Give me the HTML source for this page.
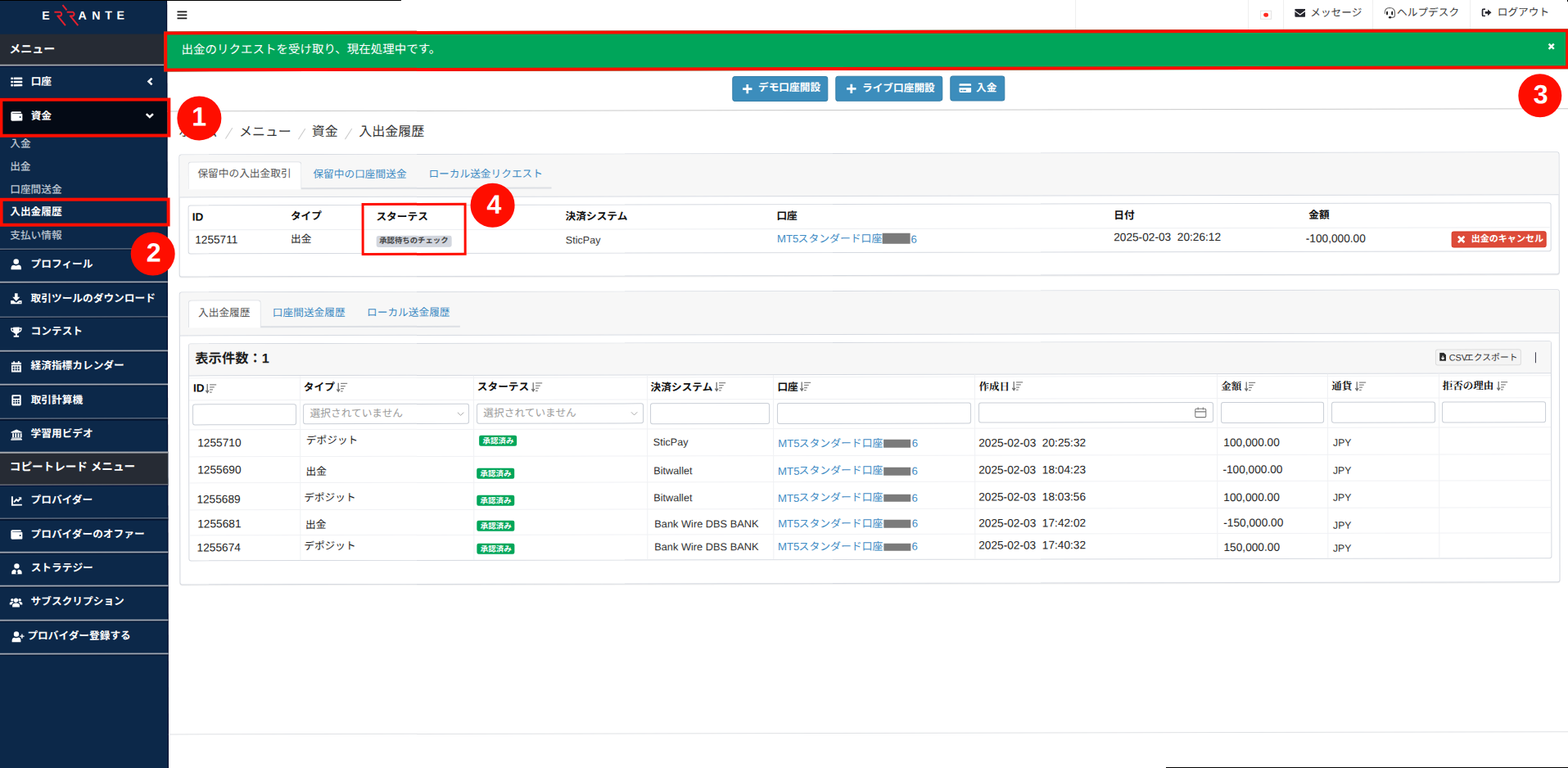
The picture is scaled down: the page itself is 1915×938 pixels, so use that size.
<!DOCTYPE html>
<html lang="ja">
<head>
<meta charset="utf-8">
<title>入出金履歴</title>
<style>
html,body{margin:0;padding:0;overflow:hidden;}
html{width:1915px;height:938px;}
body{width:1915px;height:938px;position:relative;overflow:hidden;background:#fff;
 font-family:"Liberation Sans",sans-serif;color:#333;}
div,span,svg{box-sizing:border-box;}
#page{position:absolute;left:0;top:0;width:1915px;height:938px;
 transform:rotate(-0.1117deg);transform-origin:957.5px 469px;}
.abs{position:absolute;}
.inp{position:absolute;background:#fff;border:1px solid #c9ced6;border-radius:3px;}
.circ{position:absolute;width:53.4px;height:53.4px;border-radius:50%;background:#ff0e00;}
.rbox{position:absolute;border:4px solid #ff0e00;}
.tx{position:absolute;white-space:nowrap;line-height:1.2;font-family:"Liberation Sans","Noto Sans CJK JP",sans-serif;}
.tx.b{font-weight:bold;}
.tx.m{font-weight:500;}
.tx.sf{font-family:"Liberation Serif","Noto Serif CJK SC",serif;font-weight:bold;}
</style>
</head>
<body>
<div id="page">

<!-- sidebar -->
<div class="abs" style="left:-6px;top:-6px;width:210.8px;height:950px;background:#0c2849;border-right:1.2px solid #03082a;"></div>
<svg style="position:absolute;left:0.91px;top:-1.87px;" width="204" height="42" viewBox="0 0 204 42"><g fill="none" stroke="#e3202e" stroke-width="2" stroke-linejoin="round"><path d="M66.3 15 H73.6 Q76.6 17.2 73.8 19.7 H70.2 L79.8 31.5"/><path d="M81.6 15 H89 Q92 17.2 89.2 19.7 H85.6 L95.2 31.5"/><path d="M76.4 6.5 L81.4 12.6"/></g></svg>
<span class="tx b" style="left:52.2px;top:8.9px;font-size:14.2px;color:#fff;">E</span>
<span class="tx b" style="left:96.4px;top:9.0px;font-size:14.2px;color:#fff;">A</span>
<span class="tx b" style="left:113.1px;top:9.0px;font-size:14.2px;color:#fff;">N</span>
<span class="tx b" style="left:129.0px;top:9.1px;font-size:14.2px;color:#fff;">T</span>
<span class="tx b" style="left:143.3px;top:9.1px;font-size:14.2px;color:#fff;">E</span>
<div style="position:absolute;left:-6px;top:40.33px;width:210.8px;height:37.5px;background:#262b34;"></div>
<span class="tx b" style="left:12.1px;top:49.8px;font-size:14px;color:#fff;">メニュー</span>
<div style="position:absolute;left:-6px;top:77.23px;width:210.8px;height:1.6px;background:#a6a9ae;"></div>
<div style="position:absolute;left:-6px;top:78.83px;width:210.8px;height:1.1px;background:#020a30;"></div>
<svg style="position:absolute;left:12.73px;top:91.16px;overflow:visible;" width="16" height="14" viewBox="-1 0 16 14"><rect x="0" y="1.6" width="2.6" height="2.6" rx=".6" fill="#fff"/><rect x="3.4" y="1.65" width="10.6" height="2.5" rx=".5" fill="#fff"/><rect x="0" y="5.800000000000001" width="2.6" height="2.6" rx=".6" fill="#fff"/><rect x="3.4" y="5.85" width="10.6" height="2.5" rx=".5" fill="#fff"/><rect x="0" y="10.0" width="2.6" height="2.6" rx=".6" fill="#fff"/><rect x="3.4" y="10.05" width="10.6" height="2.5" rx=".5" fill="#fff"/></svg>
<span class="tx b" style="left:38.4px;top:90.6px;font-size:12.7px;color:#fff;">口座</span>
<svg style="position:absolute;left:179.73px;top:93.48px;" width="8" height="10" viewBox="0 0 8 10"><path d="M6.3 1.2 L2.2 5 L6.3 8.8" fill="none" stroke="#fff" stroke-width="2.5"/></svg>
<div style="position:absolute;left:-6px;top:118.33px;width:210.8px;height:47px;background:#040a15;"></div>
<svg style="position:absolute;left:12.65px;top:133.36px;overflow:visible;" width="16" height="14" viewBox="-1 0 16 14"><path d="M1.6 1.5 H11.6 Q12.6 1.5 12.6 2.6 V3.3 H2.2 Q1.4 3.3 1.4 4 H13 Q14 4 14 5 V11.6 Q14 12.8 12.8 12.8 H1.6 Q0 12.8 0 11.4 V3 Q0 1.5 1.6 1.5 Z" fill="#fff"/><circle cx="11.3" cy="8.3" r="1" fill="#0c2849"/></svg>
<span class="tx b" style="left:38.3px;top:132.6px;font-size:12.7px;color:#fff;">資金</span>
<svg style="position:absolute;left:177.65px;top:136.48px;" width="11" height="8" viewBox="0 0 11 8"><path d="M1.4 1.6 L5.5 5.5 L9.6 1.6" fill="none" stroke="#fff" stroke-width="2.5"/></svg>
<span class="tx m" style="left:12.8px;top:167.0px;font-size:12.7px;color:#b9c3cf;">入金</span>
<span class="tx m" style="left:12.7px;top:195.0px;font-size:12.7px;color:#b9c3cf;">出金</span>
<span class="tx m" style="left:12.7px;top:223.0px;font-size:12.7px;color:#b9c3cf;">口座間送金</span>
<span class="tx b" style="left:12.6px;top:249.8px;font-size:12.7px;color:#fff;">入出金履歴</span>
<span class="tx m" style="left:12.6px;top:278.8px;font-size:12.7px;color:#b9c3cf;">支払い情報</span>
<div style="position:absolute;left:-6px;top:301.63px;width:210.8px;height:1.7px;background:#a2a8b3;"></div><div style="position:absolute;left:-6px;top:303.33px;width:210.8px;height:1.1px;background:#04122c;"></div>
<svg style="position:absolute;left:12.3px;top:314.46px;overflow:visible;" width="16" height="14" viewBox="-1 0 16 14"><circle cx="7" cy="3.6" r="3.3" fill="#fff"/><path d="M0.8 13.5 V11.5 Q0.8 8 4.2 7.8 Q7 9.4 9.8 7.8 Q13.2 8 13.2 11.5 V13.5 Z" fill="#fff"/></svg>
<span class="tx b" style="left:37.9px;top:313.9px;font-size:12.7px;color:#fff;">プロフィール</span>
<div style="position:absolute;left:-6px;top:342.13px;width:210.8px;height:1.7px;background:#a2a8b3;"></div><div style="position:absolute;left:-6px;top:343.83px;width:210.8px;height:1.1px;background:#04122c;"></div>
<svg style="position:absolute;left:12.22px;top:356.06px;overflow:visible;" width="16" height="14" viewBox="-1 0 16 14"><path d="M5.2 0.5 H8.8 V5 H11.6 L7 9.8 L2.4 5 H5.2 Z" fill="#fff"/><path d="M0.3 9.2 H3.6 L7 12 L10.4 9.2 H13.7 V13.5 H0.3 Z" fill="#fff"/><circle cx="11.6" cy="11.8" r=".7" fill="#0c2849"/></svg>
<span class="tx b" style="left:37.8px;top:355.5px;font-size:12.7px;color:#fff;">取引ツールのダウンロード</span>
<div style="position:absolute;left:-6px;top:384.63px;width:210.8px;height:1.7px;background:#a2a8b3;"></div><div style="position:absolute;left:-6px;top:386.33px;width:210.8px;height:1.1px;background:#04122c;"></div>
<svg style="position:absolute;left:12.14px;top:396.96px;overflow:visible;" width="16" height="14" viewBox="-1 0 16 14"><path d="M3.2 0.8 H10.8 V4.6 Q10.8 8.3 7.9 8.9 V11 H10.2 V13 H3.8 V11 H6.1 V8.9 Q3.2 8.3 3.2 4.6 Z" fill="#fff"/><path d="M3.4 2.2 H0.9 Q0.7 6 4 6.6 M10.6 2.2 H13.1 Q13.3 6 10 6.6" stroke="#fff" stroke-width="1.3" fill="none"/></svg>
<span class="tx b" style="left:37.7px;top:396.4px;font-size:12.7px;color:#fff;">コンテスト</span>
<div style="position:absolute;left:-6px;top:426.03px;width:210.8px;height:1.7px;background:#a2a8b3;"></div><div style="position:absolute;left:-6px;top:427.73px;width:210.8px;height:1.1px;background:#04122c;"></div>
<svg style="position:absolute;left:12.06px;top:438.76px;overflow:visible;" width="16" height="14" viewBox="-1 0 16 14"><rect x="3.2" y="0.3" width="1.9" height="3" rx=".5" fill="#fff"/><rect x="8.9" y="0.3" width="1.9" height="3" rx=".5" fill="#fff"/><path d="M1 2 H13 V4.4 H1 Z M1 5.2 H13 V13.6 H1 Z" fill="#fff"/><rect x="2.6" y="6.6" width="2" height="2" fill="#0c2849"/><rect x="2.6" y="9.7" width="2" height="2" fill="#0c2849"/><rect x="5.7" y="6.6" width="2" height="2" fill="#0c2849"/><rect x="5.7" y="9.7" width="2" height="2" fill="#0c2849"/><rect x="8.8" y="6.6" width="2" height="2" fill="#0c2849"/><rect x="8.8" y="9.7" width="2" height="2" fill="#0c2849"/></svg>
<span class="tx b" style="left:37.6px;top:438.2px;font-size:12.7px;color:#fff;">経済指標カレンダー</span>
<div style="position:absolute;left:-6px;top:467.43px;width:210.8px;height:1.7px;background:#a2a8b3;"></div><div style="position:absolute;left:-6px;top:469.13px;width:210.8px;height:1.1px;background:#04122c;"></div>
<svg style="position:absolute;left:11.97px;top:480.16px;overflow:visible;" width="16" height="14" viewBox="-1 0 16 14"><rect x="1.3" y="0.4" width="11.4" height="13.2" rx="1.4" fill="#fff"/><rect x="3.2" y="2.3" width="7.6" height="2.7" fill="#0c2849"/><rect x="3.2" y="6.6" width="1.9" height="1.8" fill="#0c2849"/><rect x="3.2" y="9.3" width="1.9" height="1.8" fill="#0c2849"/><rect x="6.0" y="6.6" width="1.9" height="1.8" fill="#0c2849"/><rect x="6.0" y="9.3" width="1.9" height="1.8" fill="#0c2849"/><rect x="8.8" y="6.6" width="1.9" height="1.8" fill="#0c2849"/><rect x="8.8" y="9.3" width="1.9" height="1.8" fill="#0c2849"/></svg>
<span class="tx b" style="left:37.6px;top:479.6px;font-size:12.7px;color:#fff;">取引計算機</span>
<div style="position:absolute;left:-6px;top:508.73px;width:210.8px;height:1.7px;background:#a2a8b3;"></div><div style="position:absolute;left:-6px;top:510.43px;width:210.8px;height:1.1px;background:#04122c;"></div>
<svg style="position:absolute;left:11.89px;top:521.76px;overflow:visible;" width="16" height="14" viewBox="-1 0 16 14"><path d="M7 0.6 L13.6 3.6 V4.8 H0.4 V3.6 Z" fill="#fff"/><rect x="2.0" y="5.4" width="1.9" height="5" fill="#fff"/><rect x="5.2" y="5.4" width="1.9" height="5" fill="#fff"/><rect x="8.4" y="5.4" width="1.9" height="5" fill="#fff"/><rect x="11.600000000000001" y="5.4" width="1.9" height="5" fill="#fff"/><rect x="1" y="10.6" width="12" height="1.3" fill="#fff"/><rect x="0.2" y="12.3" width="13.6" height="1.5" fill="#fff"/></svg>
<span class="tx b" style="left:37.5px;top:521.2px;font-size:12.7px;color:#fff;">学習用ビデオ</span>
<div style="position:absolute;left:-6px;top:550.93px;width:210.8px;height:39.8px;background:#262b34;"></div>
<div style="position:absolute;left:-6px;top:550.33px;width:210.8px;height:1.6px;background:#a6a9ae;"></div>
<div style="position:absolute;left:-6px;top:589.73px;width:210.8px;height:1.6px;background:#a6a9ae;"></div>
<div style="position:absolute;left:-6px;top:591.33px;width:210.8px;height:1.1px;background:#020a30;"></div>
<span class="tx b" style="left:11.6px;top:561.2px;font-size:13.6px;color:#fff;">コピートレード メニュー</span>
<svg style="position:absolute;left:11.74px;top:602.86px;overflow:visible;" width="16" height="14" viewBox="-1 0 16 14"><path d="M0.6 1.5 H2.6 V10.9 H13.6 V12.8 H0.6 Z" fill="#fff"/><path d="M3.8 8.6 L6.8 5.2 L8.8 7 L11.2 4.2" stroke="#fff" stroke-width="1.9" fill="none"/><path d="M9.2 2.4 H13 V6.2 Z" fill="#fff"/></svg>
<span class="tx b" style="left:37.3px;top:602.3px;font-size:12.7px;color:#fff;">プロバイダー</span>
<div style="position:absolute;left:-6px;top:630.73px;width:210.8px;height:1.7px;background:#a2a8b3;"></div><div style="position:absolute;left:-6px;top:632.43px;width:210.8px;height:1.1px;background:#04122c;"></div>
<svg style="position:absolute;left:11.65px;top:644.16px;overflow:visible;" width="16" height="14" viewBox="-1 0 16 14"><path d="M1.6 1.5 H11.6 Q12.6 1.5 12.6 2.6 V3.3 H2.2 Q1.4 3.3 1.4 4 H13 Q14 4 14 5 V11.6 Q14 12.8 12.8 12.8 H1.6 Q0 12.8 0 11.4 V3 Q0 1.5 1.6 1.5 Z" fill="#fff"/><circle cx="11.3" cy="8.3" r="1" fill="#0c2849"/></svg>
<span class="tx b" style="left:37.2px;top:643.6px;font-size:12.7px;color:#fff;">プロバイダーのオファー</span>
<div style="position:absolute;left:-6px;top:672.03px;width:210.8px;height:1.7px;background:#a2a8b3;"></div><div style="position:absolute;left:-6px;top:673.73px;width:210.8px;height:1.1px;background:#04122c;"></div>
<svg style="position:absolute;left:11.57px;top:685.76px;overflow:visible;" width="16" height="14" viewBox="-1 0 16 14"><circle cx="7" cy="3.5" r="3.2" fill="#fff"/><path d="M0.8 13.5 V11.5 Q0.8 8 4.6 7.6 L7 10 L9.4 7.6 Q13.2 8 13.2 11.5 V13.5 Z" fill="#fff"/><path d="M6.3 9.5 H7.7 L8.3 12.6 L7 13.6 L5.7 12.6 Z" fill="#0c2849"/></svg>
<span class="tx b" style="left:37.2px;top:685.2px;font-size:12.7px;color:#fff;">ストラテジー</span>
<div style="position:absolute;left:-6px;top:713.43px;width:210.8px;height:1.7px;background:#a2a8b3;"></div><div style="position:absolute;left:-6px;top:715.13px;width:210.8px;height:1.1px;background:#04122c;"></div>
<svg style="position:absolute;left:11.49px;top:726.96px;overflow:visible;" width="16" height="14" viewBox="-1 0 16 14"><circle cx="7" cy="4.3" r="2.6" fill="#fff"/><circle cx="2.4" cy="3.9" r="1.8" fill="#fff"/><circle cx="11.6" cy="3.9" r="1.8" fill="#fff"/><path d="M2.6 12.6 V10.6 Q2.6 7.6 7 7.6 Q11.4 7.6 11.4 10.6 V12.6 Z" fill="#fff"/><path d="M-0.8 9.6 V8.4 Q-0.8 6.2 2.4 6.2 Q3.6 6.2 4.2 6.8 Q2.2 7.6 1.8 9.6 Z M14.8 9.6 V8.4 Q14.8 6.2 11.6 6.2 Q10.4 6.2 9.8 6.8 Q11.8 7.6 12.2 9.6 Z" fill="#fff"/></svg>
<span class="tx b" style="left:37.1px;top:726.4px;font-size:12.7px;color:#fff;">サブスクリプション</span>
<div style="position:absolute;left:-6px;top:754.83px;width:210.8px;height:1.7px;background:#a2a8b3;"></div><div style="position:absolute;left:-6px;top:756.53px;width:210.8px;height:1.1px;background:#04122c;"></div>
<svg style="position:absolute;left:12.81px;top:768.56px;overflow:visible;" width="16" height="14" viewBox="-1 0 16 14"><circle cx="5.4" cy="3.6" r="3.2" fill="#fff"/><path d="M0 13.5 V11.5 Q0 8 3 7.8 Q5.4 9.2 7.8 7.8 Q10.8 8 10.8 11.5 V13.5 Z" fill="#fff"/><path d="M11.6 3.6 H13 V5.6 H15 V7 H13 V9 H11.6 V7 H9.6 V5.6 H11.6 Z" fill="#fff"/></svg>
<span class="tx b" style="left:32.8px;top:768.0px;font-size:12.7px;color:#fff;">プロバイダー登録する</span>
<div style="position:absolute;left:-6px;top:796.43px;width:210.8px;height:1.7px;background:#a2a8b3;"></div><div style="position:absolute;left:-6px;top:798.13px;width:210.8px;height:1.1px;background:#04122c;"></div>
<!-- top bar -->
<svg style="position:absolute;left:216.89px;top:10.95px;" width="13" height="12" viewBox="0 0 13 12"><path d="M0.3 2 H12.2 M0.3 6 H12.2 M0.3 10 H12.2" stroke="#1a1a1a" stroke-width="1.7"/></svg>
<div style="position:absolute;left:1313.92px;top:-2.31px;width:1px;height:40.5px;background:#eeeeee;"></div>
<div style="position:absolute;left:1524.92px;top:-1.9px;width:1px;height:40.5px;background:#eeeeee;"></div>
<div style="position:absolute;left:1568.22px;top:-1.81px;width:1px;height:40.5px;background:#eeeeee;"></div>
<div style="position:absolute;left:1677.32px;top:-1.6px;width:1px;height:40.5px;background:#eeeeee;"></div>
<div style="position:absolute;left:1796.32px;top:-1.37px;width:1px;height:40.5px;background:#eeeeee;"></div>
<div style="position:absolute;left:1539.89px;top:14.13px;width:14.5px;height:10.5px;background:#fff;border:1px solid #e3e3e3;"></div>
<div style="position:absolute;left:1544.28px;top:16.64px;width:5.6px;height:5.6px;background:#ff2a1f;border-radius:50%;"></div>
<svg style="position:absolute;left:1581.99px;top:12.02px;" width="13.4" height="10.2" viewBox="0 0 14 11"><path d="M0 1.2 Q0 0 1.2 0 H12.8 Q14 0 14 1.2 V2 L7 7 L0 2 Z M0 3.6 L7 8.7 L14 3.6 V9.8 Q14 11 12.8 11 H1.2 Q0 11 0 9.8 Z" fill="#26262e"/></svg>
<span class="tx" style="left:1601.1px;top:9.9px;font-size:12.7px;color:#3c3c3c;">メッセージ</span>
<svg style="position:absolute;left:1690.9px;top:9.83px;" width="15" height="15" viewBox="0 0 15 15"><path d="M1.2 8.2 Q0.5 1 7 0.9 Q13.4 1 13.4 7 V10.4 Q13.4 12.7 9.2 12.9" fill="none" stroke="#6a6a6a" stroke-width="1.15"/><ellipse cx="3.9" cy="7.5" rx="1.05" ry="2.5" fill="#1a1a1a"/><ellipse cx="10.1" cy="7.5" rx="1.05" ry="2.5" fill="#1a1a1a"/><ellipse cx="7.5" cy="12.7" rx="1.9" ry="1.25" fill="#222"/></svg>
<span class="tx" style="left:1706.9px;top:10.1px;font-size:12.7px;color:#3c3c3c;">ヘルプデスク</span>
<svg style="position:absolute;left:1810.49px;top:11.96px;" width="13.3" height="10.0" viewBox="0 0 14 11.5"><path d="M5 0.9 H2.6 Q1 0.9 1 2.5 V9 Q1 10.6 2.6 10.6 H5" fill="none" stroke="#26262e" stroke-width="2"/><path d="M4.6 4.1 H8.4 V1.3 L13.6 5.75 L8.4 10.2 V7.4 H4.6 Z" fill="#26262e"/></svg>
<span class="tx" style="left:1829.6px;top:10.4px;font-size:12.7px;color:#3c3c3c;">ログアウト</span>
<!-- alert banner -->
<div style="position:absolute;left:200.8px;top:36.9px;width:1716.1px;height:48.8px;background:#00a55a;border:4.1px solid #ff0e00;"></div>
<span class="tx" style="left:222.2px;top:51.2px;font-size:14.5px;color:#fff;">出金のリクエストを受け取り、現在処理中です。</span>
<svg style="position:absolute;left:1891.31px;top:54.32px;" width="9" height="9" viewBox="0 0 9 9"><path d="M1.4 1.4 L7.6 7.6 M7.6 1.4 L1.4 7.6" stroke="#fff" stroke-width="2.4"/></svg>
<!-- buttons -->
<div style="position:absolute;left:895.23px;top:92.88px;width:116.5px;height:31px;background:#3c8dbc;border:1px solid #367fa9;border-radius:3.5px;"></div><svg style="position:absolute;left:906.72px;top:101.9px;" width="13" height="13" viewBox="0 0 13 13"><path d="M6.5 0.8 V12.2 M0.8 6.5 H12.2" stroke="#fff" stroke-width="2.7"/></svg><span class="tx b" style="left:926.7px;top:100.3px;font-size:12.7px;color:#fff;">デモ口座開設</span>
<div style="position:absolute;left:1021.23px;top:93.12px;width:130.5px;height:31px;background:#3c8dbc;border:1px solid #367fa9;border-radius:3.5px;"></div><svg style="position:absolute;left:1033.72px;top:102.15px;" width="13" height="13" viewBox="0 0 13 13"><path d="M6.5 0.8 V12.2 M0.8 6.5 H12.2" stroke="#fff" stroke-width="2.7"/></svg><span class="tx b" style="left:1053.7px;top:100.6px;font-size:12.7px;color:#fff;">ライブ口座開設</span>
<div style="position:absolute;left:1161.23px;top:93.4px;width:66.5px;height:31px;background:#3c8dbc;border:1px solid #367fa9;border-radius:3.5px;"></div><svg style="position:absolute;left:1171.72px;top:101.92px;" width="15" height="12" viewBox="0 0 15 12"><path d="M1.4 0.6 H13.6 Q15 0.6 15 2 V3.2 H0 V2 Q0 0.6 1.4 0.6 Z M0 5.6 H15 V10 Q15 11.4 13.6 11.4 H1.4 Q0 11.4 0 10 Z" fill="#fff"/><rect x="1.8" y="8.2" width="2.4" height="1.4" fill="#3c8dbc"/><rect x="5" y="8.2" width="3.6" height="1.4" fill="#3c8dbc"/></svg><span class="tx b" style="left:1192.7px;top:100.8px;font-size:12.7px;color:#fff;">入金</span>
<div style="position:absolute;left:204.8px;top:133.6px;width:1720px;height:1.3px;background:#c9c9c9;"></div>
<!-- breadcrumb -->
<span class="tx" style="left:218.4px;top:150.0px;font-size:15.95px;color:#363636;">ホーム</span>
<svg style="position:absolute;left:274.81px;top:154.37px;" width="11" height="15" viewBox="0 0 11 15"><path d="M1 14.1 L9.4 1" stroke="#cbcbcb" stroke-width="1.05" fill="none"/></svg>
<span class="tx" style="left:292.6px;top:150.1px;font-size:15.95px;color:#363636;">メニュー</span>
<svg style="position:absolute;left:364.31px;top:154.54px;" width="11" height="15" viewBox="0 0 11 15"><path d="M1 14.1 L9.4 1" stroke="#cbcbcb" stroke-width="1.05" fill="none"/></svg>
<span class="tx" style="left:381.4px;top:150.3px;font-size:15.95px;color:#363636;">資金</span>
<svg style="position:absolute;left:420.61px;top:154.65px;" width="11" height="15" viewBox="0 0 11 15"><path d="M1 14.1 L9.4 1" stroke="#cbcbcb" stroke-width="1.05" fill="none"/></svg>
<span class="tx" style="left:438.8px;top:150.4px;font-size:16.05px;color:#363636;">入出金履歴</span>
<!-- panel 1 : pending -->
<div style="position:absolute;left:219.1px;top:187.3px;width:1685.7px;height:149.8px;background:#fff;border:1px solid #d5d9e0;border-radius:3px;box-shadow:0 1px 1px rgba(0,0,0,.07);"></div>
<div style="position:absolute;left:220.1px;top:188.3px;width:1683.7px;height:50.4px;background:#f7f7f7;border-radius:2px 2px 0 0;"></div>
<div style="position:absolute;left:220.1px;top:238.5px;width:1683.7px;height:1.2px;background:#d5d9e0;"></div>
<div style="position:absolute;left:368.47px;top:228.45px;width:306px;height:1.2px;background:#dcdfe4;"></div>
<div style="position:absolute;left:229.83px;top:196.18px;width:139.1px;height:33.4px;background:#fff;border:1px solid #dcdfe4;border-bottom:none;border-radius:4px 4px 0 0;"></div>
<span class="tx" style="left:241.9px;top:204.4px;font-size:12.7px;color:#5a5a5a;">保留中の入出金取引</span>
<span class="tx" style="left:382.9px;top:204.7px;font-size:12.7px;color:#3f8cc4;">保留中の口座間送金</span>
<span class="tx" style="left:523.9px;top:204.7px;font-size:12.7px;color:#3f8cc4;">ローカル送金リクエスト</span>
<div style="position:absolute;left:229.7px;top:249.4px;width:1665.4px;height:59.4px;background:#fff;border:1px solid #d5d9e0;border-radius:3px;"></div>
<div style="position:absolute;left:230.7px;top:278.9px;width:1662.8px;height:1px;background:#eceef1;"></div>
<span class="tx b" style="left:235.1px;top:256.2px;font-size:13.6px;color:#111;">ID</span>
<span class="tx b" style="left:355.3px;top:256.4px;font-size:12.7px;color:#111;">タイプ</span>
<span class="tx b" style="left:459.8px;top:256.6px;font-size:12.7px;color:#111;">スターテス</span>
<span class="tx b" style="left:691.0px;top:256.7px;font-size:12.7px;color:#111;">決済システム</span>
<span class="tx b" style="left:948.8px;top:257.0px;font-size:12.7px;color:#111;">口座</span>
<span class="tx b" style="left:1360.6px;top:256.8px;font-size:12.7px;color:#111;">日付</span>
<span class="tx b" style="left:1598.6px;top:257.0px;font-size:12.7px;color:#111;">金額</span>
<span class="tx" style="left:238.5px;top:283.9px;font-size:13.7px;color:#262626;">1255711</span>
<span class="tx" style="left:355.3px;top:284.0px;font-size:12.7px;color:#262626;">出金</span>
<div style="position:absolute;left:459.75px;top:287.23px;width:92.2px;height:13.4px;background:#d2d6de;border-radius:2.5px;"></div>
<span class="tx b" style="left:463.5px;top:286.8px;font-size:9.4px;color:#444;">承認待ちのチェック</span>
<span class="tx" style="left:691.1px;top:285.5px;font-size:12.6px;color:#3a3a3a;">SticPay</span>
<span class="tx" style="left:949.4px;top:284.4px;font-size:13.2px;color:#3f8cc4;">MT5</span><span class="tx" style="left:974.9px;top:284.1px;font-size:12.85px;color:#3f8cc4;">スタンダード口座</span><div style="position:absolute;left:1078.26px;top:285.13px;width:33.6px;height:12.4px;background:#7b7b7b;"></div><span class="tx" style="left:1112.9px;top:284.7px;font-size:13.2px;color:#3f8cc4;">6</span>
<span class="tx" style="left:1360.5px;top:283.4px;font-size:13.7px;color:#262626;white-space:pre;">2025-02-03  20:26:12</span>
<span class="tx" style="left:1595.1px;top:285.4px;font-size:13.7px;color:#262626;">-100,000.00</span>
<div style="position:absolute;left:1773.36px;top:284.49px;width:115.6px;height:19.2px;background:#dd4b39;border:1px solid #d73925;border-radius:3px;"></div>
<svg style="position:absolute;left:1780.15px;top:289.0px;" width="10" height="10" viewBox="0 0 10 10"><path d="M1.3 1.3 L8.7 8.7 M8.7 1.3 L1.3 8.7" stroke="#fff" stroke-width="2.7"/></svg>
<span class="tx b" style="left:1797.0px;top:287.4px;font-size:11.05px;color:#fff;">出金のキャンセル</span>
<!-- panel 2 : history -->
<div style="position:absolute;left:219.1px;top:355.4px;width:1685.7px;height:358.1px;background:#fff;border:1px solid #d5d9e0;border-radius:3px;box-shadow:0 1px 1px rgba(0,0,0,.07);"></div>
<div style="position:absolute;left:220.1px;top:356.4px;width:1683.7px;height:51.8px;background:#f7f7f7;border-radius:2px 2px 0 0;"></div>
<div style="position:absolute;left:220.1px;top:407.9px;width:1683.7px;height:1.2px;background:#d5d9e0;"></div>
<div style="position:absolute;left:318.14px;top:397.35px;width:244px;height:1.2px;background:#dcdfe4;"></div>
<div style="position:absolute;left:229.5px;top:364.98px;width:89.6px;height:33.6px;background:#fff;border:1px solid #dcdfe4;border-bottom:none;border-radius:4px 4px 0 0;"></div>
<span class="tx" style="left:242.2px;top:373.8px;font-size:12.7px;color:#5a5a5a;">入出金履歴</span>
<span class="tx" style="left:333.0px;top:374.0px;font-size:12.7px;color:#3f8cc4;">口座間送金履歴</span>
<span class="tx" style="left:448.2px;top:374.2px;font-size:12.7px;color:#3f8cc4;">ローカル送金履歴</span>
<div style="position:absolute;left:229.7px;top:417.8px;width:1665px;height:266.2px;background:#fff;border:1px solid #d5d9e0;border-radius:3px;"></div>
<div style="position:absolute;left:230.7px;top:418.8px;width:1663px;height:38.4px;background:#f7f7f7;"></div>
<div style="position:absolute;left:230.7px;top:457.1px;width:1663px;height:1.2px;background:#d5d9e0;"></div>
<span class="tx b" style="left:238.4px;top:427.3px;font-size:16.3px;color:#1d1d1d;">表示件数：1</span>
<div style="position:absolute;left:1753.08px;top:428.05px;width:104.5px;height:20px;background:#f4f4f4;border:1px solid #ddd;border-radius:3px;"></div>
<svg style="position:absolute;left:1758.47px;top:432.36px;" width="8.4" height="10.6" viewBox="0 0 8 10"><path d="M0.3 0.3 H5 L7.7 3 V9.7 H0.3 Z" fill="#2a2a2a"/><path d="M4 3.8 V7.6 M2.4 6.2 L4 7.8 L5.6 6.2" stroke="#fff" stroke-width="1.1" fill="none"/></svg>
<span class="tx" style="left:1769.8px;top:432.0px;font-size:10.9px;color:#333;">CSV</span>
<span class="tx" style="left:1789.1px;top:432.0px;font-size:10.8px;color:#333;">エクスポート</span>
<div style="position:absolute;left:1875.18px;top:431.99px;width:1.3px;height:13px;background:#3a3a4a;"></div>
<div style="position:absolute;left:230.7px;top:460.2px;width:1663px;height:1px;background:#f1f2f4;"></div>
<div style="position:absolute;left:366.2px;top:458.3px;width:1px;height:224.9px;background:#f0f1f4;"></div>
<div style="position:absolute;left:578.2px;top:458.3px;width:1px;height:224.9px;background:#f0f1f4;"></div>
<div style="position:absolute;left:790.4px;top:458.3px;width:1px;height:224.9px;background:#f0f1f4;"></div>
<div style="position:absolute;left:944.2px;top:458.3px;width:1px;height:224.9px;background:#f0f1f4;"></div>
<div style="position:absolute;left:1190.4px;top:458.3px;width:1px;height:224.9px;background:#f0f1f4;"></div>
<div style="position:absolute;left:1486.1px;top:458.3px;width:1px;height:224.9px;background:#f0f1f4;"></div>
<div style="position:absolute;left:1621.3px;top:458.3px;width:1px;height:224.9px;background:#f0f1f4;"></div>
<div style="position:absolute;left:1756.6px;top:458.3px;width:1px;height:224.9px;background:#f0f1f4;"></div>
<div style="position:absolute;left:230.7px;top:486.9px;width:1663px;height:1px;background:#f0f1f4;"></div>
<div style="position:absolute;left:230.7px;top:522.9px;width:1663px;height:1px;background:#f0f1f4;"></div>
<div style="position:absolute;left:230.7px;top:555.8px;width:1663px;height:1px;background:#f0f1f4;"></div>
<div style="position:absolute;left:230.7px;top:588.1px;width:1663px;height:1px;background:#f0f1f4;"></div>
<div style="position:absolute;left:230.7px;top:621.0px;width:1663px;height:1px;background:#f0f1f4;"></div>
<div style="position:absolute;left:230.7px;top:652.2px;width:1663px;height:1px;background:#f0f1f4;"></div>
<span class="tx b" style="left:236.0px;top:465.4px;font-size:13.6px;color:#111;">ID</span>
<svg style="position:absolute;left:250.8px;top:466.82px;" width="14" height="13" viewBox="0 0 14 13"><path d="M2.2 0.6 V11 M0.3 8.4 L2.2 11.2 L4.1 8.4" fill="none" stroke="#6e6e6e" stroke-width="1.25"/><path d="M5.1 1.4 H13.2 M5.1 4.5 H10.8 M5.1 7.6 H9 M5.1 10.7 H7.7" stroke="#868686" stroke-width="1.25"/></svg>
<span class="tx b" style="left:370.8px;top:465.2px;font-size:12.7px;color:#111;">タイプ</span>
<svg style="position:absolute;left:411.3px;top:466.13px;" width="14" height="13" viewBox="0 0 14 13"><path d="M2.2 0.6 V11 M0.3 8.4 L2.2 11.2 L4.1 8.4" fill="none" stroke="#6e6e6e" stroke-width="1.25"/><path d="M5.1 1.4 H13.2 M5.1 4.5 H10.8 M5.1 7.6 H9 M5.1 10.7 H7.7" stroke="#868686" stroke-width="1.25"/></svg>
<span class="tx b" style="left:582.8px;top:465.4px;font-size:12.7px;color:#111;">スターテス</span>
<svg style="position:absolute;left:648.6px;top:466.4px;" width="14" height="13" viewBox="0 0 14 13"><path d="M2.2 0.6 V11 M0.3 8.4 L2.2 11.2 L4.1 8.4" fill="none" stroke="#6e6e6e" stroke-width="1.25"/><path d="M5.1 1.4 H13.2 M5.1 4.5 H10.8 M5.1 7.6 H9 M5.1 10.7 H7.7" stroke="#868686" stroke-width="1.25"/></svg>
<span class="tx b" style="left:794.6px;top:465.5px;font-size:12.7px;color:#111;">決済システム</span>
<svg style="position:absolute;left:873.0px;top:466.44px;" width="14" height="13" viewBox="0 0 14 13"><path d="M2.2 0.6 V11 M0.3 8.4 L2.2 11.2 L4.1 8.4" fill="none" stroke="#6e6e6e" stroke-width="1.25"/><path d="M5.1 1.4 H13.2 M5.1 4.5 H10.8 M5.1 7.6 H9 M5.1 10.7 H7.7" stroke="#868686" stroke-width="1.25"/></svg>
<span class="tx b" style="left:949.4px;top:465.6px;font-size:12.7px;color:#111;">口座</span>
<svg style="position:absolute;left:977.01px;top:466.44px;" width="14" height="13" viewBox="0 0 14 13"><path d="M2.2 0.6 V11 M0.3 8.4 L2.2 11.2 L4.1 8.4" fill="none" stroke="#6e6e6e" stroke-width="1.25"/><path d="M5.1 1.4 H13.2 M5.1 4.5 H10.8 M5.1 7.6 H9 M5.1 10.7 H7.7" stroke="#868686" stroke-width="1.25"/></svg>
<span class="tx sf" style="left:1195.6px;top:465.6px;font-size:12.5px;color:#111;">作成日</span>
<svg style="position:absolute;left:1235.51px;top:466.34px;" width="14" height="13" viewBox="0 0 14 13"><path d="M2.2 0.6 V11 M0.3 8.4 L2.2 11.2 L4.1 8.4" fill="none" stroke="#6e6e6e" stroke-width="1.25"/><path d="M5.1 1.4 H13.2 M5.1 4.5 H10.8 M5.1 7.6 H9 M5.1 10.7 H7.7" stroke="#868686" stroke-width="1.25"/></svg>
<span class="tx sf" style="left:1491.2px;top:465.7px;font-size:12.5px;color:#111;">金額</span>
<svg style="position:absolute;left:1519.71px;top:466.5px;" width="14" height="13" viewBox="0 0 14 13"><path d="M2.2 0.6 V11 M0.3 8.4 L2.2 11.2 L4.1 8.4" fill="none" stroke="#6e6e6e" stroke-width="1.25"/><path d="M5.1 1.4 H13.2 M5.1 4.5 H10.8 M5.1 7.6 H9 M5.1 10.7 H7.7" stroke="#868686" stroke-width="1.25"/></svg>
<span class="tx sf" style="left:1626.2px;top:466.0px;font-size:12.5px;color:#111;">通貨</span>
<svg style="position:absolute;left:1654.81px;top:466.76px;" width="14" height="13" viewBox="0 0 14 13"><path d="M2.2 0.6 V11 M0.3 8.4 L2.2 11.2 L4.1 8.4" fill="none" stroke="#6e6e6e" stroke-width="1.25"/><path d="M5.1 1.4 H13.2 M5.1 4.5 H10.8 M5.1 7.6 H9 M5.1 10.7 H7.7" stroke="#868686" stroke-width="1.25"/></svg>
<span class="tx sf" style="left:1761.8px;top:465.9px;font-size:12.5px;color:#111;">拒否の理由</span>
<svg style="position:absolute;left:1828.01px;top:466.7px;" width="14" height="13" viewBox="0 0 14 13"><path d="M2.2 0.6 V11 M0.3 8.4 L2.2 11.2 L4.1 8.4" fill="none" stroke="#6e6e6e" stroke-width="1.25"/><path d="M5.1 1.4 H13.2 M5.1 4.5 H10.8 M5.1 7.6 H9 M5.1 10.7 H7.7" stroke="#868686" stroke-width="1.25"/></svg>
<div class="inp" style="left:234.95px;top:491.99px;width:126.6px;height:26.4px;"></div>
<div class="inp" style="left:370.35px;top:492.06px;width:203px;height:25.4px;"></div><span class="tx" style="left:378.5px;top:497.4px;font-size:12.7px;color:#9c9c9c;">選択されていません</span><svg style="position:absolute;left:557.83px;top:502.22px;" width="9" height="6" viewBox="0 0 9 6"><path d="M0.8 0.9 L4.5 4.6 L8.2 0.9" fill="none" stroke="#a3a3a3" stroke-width="0.95"/></svg>
<div class="inp" style="left:582.15px;top:492.07px;width:203.4px;height:25.4px;"></div><span class="tx" style="left:590.3px;top:497.4px;font-size:12.7px;color:#9c9c9c;">選択されていません</span><svg style="position:absolute;left:770.03px;top:502.23px;" width="9" height="6" viewBox="0 0 9 6"><path d="M0.8 0.9 L4.5 4.6 L8.2 0.9" fill="none" stroke="#a3a3a3" stroke-width="0.95"/></svg>
<div class="inp" style="left:793.95px;top:492.28px;width:146px;height:25.8px;"></div>
<div class="inp" style="left:948.96px;top:491.58px;width:236.8px;height:26.6px;"></div>
<div class="inp" style="left:1195.36px;top:491.86px;width:286.4px;height:25.4px;"></div>
<svg style="position:absolute;left:1459.44px;top:498.38px;" width="14.5" height="13.5" viewBox="0 0 14.5 13.5"><rect x="0.7" y="2.2" width="13" height="10.4" rx="1.4" fill="none" stroke="#7b7b7b" stroke-width="1.1"/><path d="M0.7 5.9 H13.7 M4.1 0.5 V3.4 M10.3 0.5 V3.4" stroke="#7b7b7b" stroke-width="1.1"/></svg>
<div class="inp" style="left:1490.96px;top:492.24px;width:126px;height:25.8px;"></div>
<div class="inp" style="left:1625.96px;top:492.30px;width:126.8px;height:25.8px;"></div>
<div class="inp" style="left:1761.16px;top:492.17px;width:127.2px;height:26.2px;"></div>
<span class="tx" style="left:241.1px;top:532.2px;font-size:13.7px;color:#262626;">1255710</span>
<span class="tx" style="left:373.7px;top:530.1px;font-size:12.7px;color:#262626;">デポジット</span>
<div style="position:absolute;left:585.08px;top:530.87px;width:45.8px;height:12.8px;background:#00a65a;border-radius:2.2px;"></div>
<span class="tx b" style="left:589.3px;top:531.7px;font-size:9.5px;color:#fff;">承認済み</span>
<span class="tx" style="left:797.7px;top:532.5px;font-size:12.6px;color:#333;">SticPay</span>
<span class="tx" style="left:950.0px;top:533.9px;font-size:13.2px;color:#3f8cc4;">MT5</span><span class="tx" style="left:975.5px;top:533.6px;font-size:12.85px;color:#3f8cc4;">スタンダード口座</span><div style="position:absolute;left:1078.77px;top:537.49px;width:33.6px;height:9.3px;background:#7b7b7b;"></div><span class="tx" style="left:1113.5px;top:534.2px;font-size:13.2px;color:#3f8cc4;">6</span>
<span class="tx" style="left:1195.1px;top:533.5px;font-size:13.7px;color:#262626;white-space:pre;">2025-02-03  20:25:32</span>
<span class="tx" style="left:1494.2px;top:534.1px;font-size:13.7px;color:#262626;">100,000.00</span>
<span class="tx" style="left:1627.9px;top:535.0px;font-size:12.2px;color:#333;">JPY</span>
<span class="tx" style="left:241.0px;top:565.2px;font-size:13.7px;color:#262626;">1255690</span>
<span class="tx" style="left:373.4px;top:567.9px;font-size:12.7px;color:#262626;">出金</span>
<div style="position:absolute;left:582.2px;top:570.97px;width:45.8px;height:12.8px;background:#00a65a;border-radius:2.2px;"></div>
<span class="tx b" style="left:586.4px;top:571.8px;font-size:9.5px;color:#fff;">承認済み</span>
<span class="tx" style="left:798.1px;top:567.9px;font-size:12.7px;color:#333;">Bitwallet</span>
<span class="tx" style="left:949.9px;top:567.7px;font-size:13.2px;color:#3f8cc4;">MT5</span><span class="tx" style="left:975.4px;top:567.4px;font-size:12.85px;color:#3f8cc4;">スタンダード口座</span><div style="position:absolute;left:1078.7px;top:571.29px;width:33.6px;height:9.3px;background:#7b7b7b;"></div><span class="tx" style="left:1113.4px;top:568.0px;font-size:13.2px;color:#3f8cc4;">6</span>
<span class="tx" style="left:1195.0px;top:567.2px;font-size:13.7px;color:#262626;white-space:pre;">2025-02-03  18:04:23</span>
<span class="tx" style="left:1493.2px;top:566.7px;font-size:13.7px;color:#262626;">-100,000.00</span>
<span class="tx" style="left:1627.8px;top:569.0px;font-size:12.2px;color:#333;">JPY</span>
<span class="tx" style="left:240.1px;top:601.0px;font-size:13.7px;color:#262626;">1255689</span>
<span class="tx" style="left:370.9px;top:599.9px;font-size:12.7px;color:#262626;">デポジット</span>
<div style="position:absolute;left:582.14px;top:603.97px;width:45.8px;height:12.8px;background:#00a65a;border-radius:2.2px;"></div>
<span class="tx b" style="left:586.3px;top:604.8px;font-size:9.5px;color:#fff;">承認済み</span>
<span class="tx" style="left:798.0px;top:600.7px;font-size:12.7px;color:#333;">Bitwallet</span>
<span class="tx" style="left:949.8px;top:600.6px;font-size:13.2px;color:#3f8cc4;">MT5</span><span class="tx" style="left:975.3px;top:600.3px;font-size:12.85px;color:#3f8cc4;">スタンダード口座</span><div style="position:absolute;left:1078.64px;top:604.19px;width:33.6px;height:9.3px;background:#7b7b7b;"></div><span class="tx" style="left:1113.3px;top:600.9px;font-size:13.2px;color:#3f8cc4;">6</span>
<span class="tx" style="left:1194.9px;top:600.2px;font-size:13.7px;color:#262626;white-space:pre;">2025-02-03  18:03:56</span>
<span class="tx" style="left:1494.0px;top:600.5px;font-size:13.7px;color:#262626;">100,000.00</span>
<span class="tx" style="left:1627.7px;top:601.6px;font-size:12.2px;color:#333;">JPY</span>
<span class="tx" style="left:240.9px;top:631.2px;font-size:13.7px;color:#262626;">1255681</span>
<span class="tx" style="left:372.7px;top:632.7px;font-size:12.7px;color:#262626;">出金</span>
<div style="position:absolute;left:582.27px;top:635.37px;width:45.8px;height:12.8px;background:#00a65a;border-radius:2.2px;"></div>
<span class="tx b" style="left:586.5px;top:636.2px;font-size:9.5px;color:#fff;">承認済み</span>
<span class="tx" style="left:798.9px;top:631.8px;font-size:12.8px;color:#333;">Bank Wire DBS BANK</span>
<span class="tx" style="left:949.8px;top:631.9px;font-size:13.2px;color:#3f8cc4;">MT5</span><span class="tx" style="left:975.3px;top:631.6px;font-size:12.85px;color:#3f8cc4;">スタンダード口座</span><div style="position:absolute;left:1078.58px;top:635.49px;width:33.6px;height:9.3px;background:#7b7b7b;"></div><span class="tx" style="left:1113.3px;top:632.2px;font-size:13.2px;color:#3f8cc4;">6</span>
<span class="tx" style="left:1194.9px;top:631.8px;font-size:13.7px;color:#262626;white-space:pre;">2025-02-03  17:42:02</span>
<span class="tx" style="left:1493.9px;top:632.4px;font-size:13.7px;color:#262626;">-150,000.00</span>
<span class="tx" style="left:1627.7px;top:635.6px;font-size:12.2px;color:#333;">JPY</span>
<span class="tx" style="left:240.2px;top:659.9px;font-size:13.7px;color:#262626;">1255674</span>
<span class="tx" style="left:370.8px;top:659.2px;font-size:12.7px;color:#262626;">デポジット</span>
<div style="position:absolute;left:582.22px;top:663.47px;width:45.8px;height:12.8px;background:#00a65a;border-radius:2.2px;"></div>
<span class="tx b" style="left:586.4px;top:664.3px;font-size:9.5px;color:#fff;">承認済み</span>
<span class="tx" style="left:798.8px;top:659.7px;font-size:12.8px;color:#333;">Bank Wire DBS BANK</span>
<span class="tx" style="left:949.7px;top:660.0px;font-size:13.2px;color:#3f8cc4;">MT5</span><span class="tx" style="left:975.2px;top:659.7px;font-size:12.85px;color:#3f8cc4;">スタンダード口座</span><div style="position:absolute;left:1078.52px;top:663.59px;width:33.6px;height:9.3px;background:#7b7b7b;"></div><span class="tx" style="left:1113.2px;top:660.3px;font-size:13.2px;color:#3f8cc4;">6</span>
<span class="tx" style="left:1194.8px;top:659.4px;font-size:13.7px;color:#262626;white-space:pre;">2025-02-03  17:40:32</span>
<span class="tx" style="left:1494.1px;top:662.0px;font-size:13.7px;color:#262626;">150,000.00</span>
<span class="tx" style="left:1627.6px;top:663.8px;font-size:12.2px;color:#333;">JPY</span>
<div style="position:absolute;left:204.8px;top:894.6px;width:1720px;height:1.3px;background:#dfe1e4;"></div>
<!-- annotations -->
<div class="rbox" style="left:0.18px;top:117.73px;width:208.9px;height:47.8px;border-width:4px;"></div>
<div class="rbox" style="left:-0.06px;top:239.73px;width:208.3px;height:35px;border-width:4px;"></div>
<div class="rbox" style="left:442.13px;top:247.09px;width:127.6px;height:64.4px;border-width:3.7px;"></div>
<div class="circ" style="left:217.23px;top:116.11px;"></div><span class="tx b" style="left:234.8px;top:122.4px;font-size:32.2px;color:#fff;">1</span>
<div class="circ" style="left:160.41px;top:281.80px;"></div><span class="tx b" style="left:179.0px;top:288.1px;font-size:32.2px;color:#fff;">2</span>
<div class="circ" style="left:1854.99px;top:91.50px;"></div><span class="tx b" style="left:1873.5px;top:97.8px;font-size:32.2px;color:#fff;">3</span>
<div class="circ" style="left:575.33px;top:223.41px;"></div><span class="tx b" style="left:594.8px;top:229.7px;font-size:32.2px;color:#fff;">4</span>
</div>
<div style="position:absolute;left:0;top:0;width:490px;height:1px;background:#000;"></div><div style="position:absolute;left:1424px;top:937px;width:491px;height:1px;background:#000;"></div><div style="position:absolute;left:1914px;top:0;width:1px;height:2px;background:#000;"></div>
</body>
</html>
